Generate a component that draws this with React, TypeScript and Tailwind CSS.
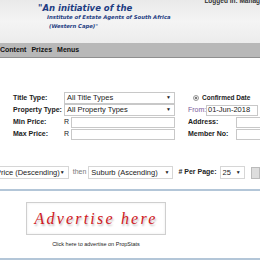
import { ReactNode } from 'react';

const labelFont = { fontFamily: '"Liberation Sans", Arial, sans-serif' };
const headFont = { fontFamily: '"DejaVu Sans", Verdana, sans-serif' };

function FakeSelect({ value, className }: { value: string; className: string }) {
  return (
    <div
      className={`flex items-center justify-between border border-[#c8c8c8] bg-white pl-[2px] pr-[3px] text-[7.5px] text-[#222] ${className}`}
      style={labelFont}
    >
      <span className="whitespace-nowrap">{value}</span>
      <span className="text-[5px]">▼</span>
    </div>
  );
}

function Row({ label, children }: { label: string; children: ReactNode }) {
  return (
    <div className="flex h-[12px] items-center">
      <span className="w-[51px] shrink-0 whitespace-nowrap text-[7px] font-bold text-[#222]" style={labelFont}>
        {label}
      </span>
      {children}
    </div>
  );
}

export default function App() {
  return (
    <div className="h-[260px] w-[260px] overflow-hidden bg-white">
      {/* Header */}
      <header className="relative h-[43px] bg-gradient-to-b from-[#e9e9e9] via-[#f4f4f4] to-[#ececec]">
        <div className="absolute right-0 top-[-4px] whitespace-nowrap text-[6.5px] font-bold text-[#333]" style={labelFont}>
          Logged in: Manag
        </div>
        <div className="pl-[38px] pt-[3px] italic font-bold text-[#1d3c82]" style={headFont}>
          <div className="text-[8.5px] leading-[10px]">"An initiative of the</div>
          <div className="pl-[9px] text-[5.3px] leading-[9px]">Institute of Estate Agents of South Africa</div>
          <div className="pl-[11px] text-[5.3px] leading-[8px]">(Western Cape)"</div>
        </div>
      </header>

      {/* Nav */}
      <nav className="flex h-[15px] items-center gap-[5px] border-b border-[#8f8f8f] bg-[#b8b8b8] text-[7px] font-bold text-[#111]" style={labelFont}>
        <span>Content</span>
        <span>Prizes</span>
        <span>Menus</span>
      </nav>

      {/* Search form */}
      <section className="flex pl-[13px] pt-[34px]">
        <div className="w-[175px] shrink-0">
          <Row label="Title Type:">
            <FakeSelect value="All Title Types" className="h-[12px] w-[111px]" />
          </Row>
          <Row label="Property Type:">
            <FakeSelect value="All Property Types" className="h-[12px] w-[111px]" />
          </Row>
          <Row label="Min Price:">
            <span className="w-[7px] text-[7px] text-[#222]" style={labelFont}>R</span>
            <div className="h-[11px] w-[104px] border border-[#c8c8c8] bg-white" />
          </Row>
          <Row label="Max Price:">
            <span className="w-[7px] text-[7px] text-[#222]" style={labelFont}>R</span>
            <div className="h-[11px] w-[104px] border border-[#c8c8c8] bg-white" />
          </Row>
        </div>
        <div>
          <div className="flex h-[12px] items-center gap-[3px] pl-[5px]">
            <span className="flex h-[6px] w-[6px] items-center justify-center rounded-full border border-[#999] bg-[#eee]">
              <span className="h-[2px] w-[2px] rounded-full bg-[#555]" />
            </span>
            <span className="whitespace-nowrap text-[6.5px] font-bold text-[#222]" style={labelFont}>Confirmed Date</span>
            <span className="ml-[8px] h-[6px] w-[6px] shrink-0 rounded-full border border-[#bbb] bg-[#f4f4f4]" />
          </div>
          <div className="flex h-[12px] items-center">
            <span className="w-[18px] text-[7px] text-[#7a5a9a]" style={labelFont}>From:</span>
            <div className="flex h-[11px] w-[52px] items-center border border-[#c8c8c8] bg-white pl-[1px] text-[7.5px] text-[#222]" style={labelFont}>
              01-Jun-2018
            </div>
          </div>
          <div className="flex h-[12px] items-center">
            <span className="w-[48px] text-[7px] font-bold text-[#222]" style={labelFont}>Address:</span>
            <div className="h-[11px] w-[40px] border border-[#c8c8c8] bg-white" />
          </div>
          <div className="flex h-[12px] items-center">
            <span className="w-[48px] text-[7px] font-bold text-[#222]" style={labelFont}>Member No:</span>
            <div className="h-[11px] w-[40px] border border-[#c8c8c8] bg-white" />
          </div>
        </div>
      </section>

      {/* Sort row */}
      <section className="mt-[26px] flex items-center">
        <FakeSelect value="Price (Descending)" className="-ml-[7px] h-[13px] w-[76px] border-[#d6d6d6]" />
        <span className="ml-[4px] mr-[2px] text-[7px] text-[#777]" style={labelFont}>then</span>
        <FakeSelect value="Suburb (Ascending)" className="h-[13px] w-[93px] border-[#d6d6d6]" />
        <span className="ml-[5px] mr-[3px] whitespace-nowrap text-[7px] font-bold text-[#222]" style={labelFont}>
          # Per Page:
        </span>
        <FakeSelect value="25" className="h-[13px] w-[27px] border-[#d6d6d6]" />
        <div className="ml-[6px] h-[12px] w-[10px] border border-[#bbb] bg-[#ddd]" />
      </section>

      {/* Ad area */}
      <section className="mt-[10px] border-y-2 border-[#b3c6d8] pb-[10px] pt-[11px]">
        <div className="ml-[26px] w-[140px]">
          <div className="flex h-[33px] items-center justify-center border border-[#cfcfcf] bg-white shadow-[inset_0_0_3px_rgba(0,0,0,0.08)]">
            <span
              className="text-[16px] italic tracking-[2.2px] text-[#d01622] [text-shadow:1px_2px_2px_rgba(0,0,0,0.25)]"
              style={{ fontFamily: '"Liberation Serif", "Times New Roman", serif' }}
            >
              Advertise here
            </span>
          </div>
          <div
            className="mt-[5px] text-center text-[5.5px] text-[#222]"
            style={{ fontFamily: '"Liberation Sans", Arial, sans-serif' }}
          >
            Click here to advertise on PropStats
          </div>
        </div>
      </section>
    </div>
  );
}
